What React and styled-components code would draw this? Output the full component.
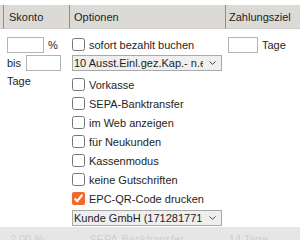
import React from "react";
import styled, { createGlobalStyle } from "styled-components";

const GlobalStyle = createGlobalStyle`
  body {
    margin: 0;
    background: #ffffff;
    font-family: "Liberation Sans", Arial, sans-serif;
    font-size: 11px;
    color: #1e1e1e;
  }
`;

const Page = styled.div`
  width: 300px;
  height: 240px;
  overflow: hidden;
  padding-top: 5px;
  box-sizing: border-box;
`;

const Grid = styled.div`
  display: grid;
  grid-template-columns: 3px 66px 156px 90px;
  width: 315px;
`;

const HeadCell = styled.div`
  height: 23px;
  display: flex;
  align-items: center;
  padding-left: ${(p) => p.$pad || 5}px;
  background: #dcdad6;
  border-left: ${(p) => (p.$first ? "none" : "1px solid #8e8e8e")};
  border-bottom: 1px solid #cfcdc9;
  white-space: nowrap;
`;

const BodyCell = styled.div`
  padding: 6px 0 0 ${(p) => p.$pad || 0}px;
  display: flex;
  flex-direction: column;
  border-left: 1px solid transparent;
`;

const Line = styled.div`
  display: flex;
  align-items: center;
  gap: ${(p) => p.$gap || 4}px;
  height: ${(p) => p.$h || 19}px;
  white-space: nowrap;
`;

const TextBox = styled.input`
  box-sizing: border-box;
  width: ${(p) => p.$w}px;
  height: 16px;
  margin: 0;
  padding: 0 2px;
  border: 1px solid #b4b4b4;
  background: #fff;
  font: inherit;
`;

const Check = styled.input.attrs({ type: "checkbox" })`
  width: 13px;
  height: 13px;
  margin: 0 0 0 2px;
  accent-color: #f0692f;
`;

const SelectWrap = styled.div`
  position: relative;
  width: 150px;
  height: 16px;
  margin: ${(p) => p.$m};
  margin-left: 2px;
`;

const Select = styled.select`
  appearance: none;
  box-sizing: border-box;
  width: 100%;
  height: 100%;
  margin: 0;
  padding: 0 18px 0 1px;
  border: 1px solid #a9a9a9;
  border-radius: 0;
  background: #efefef;
  color: #1e1e1e;
  font: inherit;
  font-size: 11px;
  line-height: 14px;
`;

const Chevron = styled.svg`
  position: absolute;
  right: 6px;
  top: 6px;
  pointer-events: none;
`;

const Band = styled.div`
  margin-top: 1px;
  height: 20px;
  background: #e6e6e6;
  display: flex;
  align-items: flex-start;
  box-sizing: border-box;
  padding: 6px 0 0 10px;
  color: #cfcfcf;
  gap: 45px;
  white-space: nowrap;
`;

const options = [
  "Vorkasse",
  "SEPA-Banktransfer",
  "im Web anzeigen",
  "für Neukunden",
  "Kassenmodus",
  "keine Gutschriften",
];

function Dropdown({ value, m }) {
  return (
    <SelectWrap $m={m}>
      <Select defaultValue={value}>
        <option>{value}</option>
      </Select>
      <Chevron width="7" height="4" viewBox="0 0 7 4">
        <path d="M0.5 0.5 L3.5 3.3 L6.5 0.5" fill="none" stroke="#444" strokeWidth="1" />
      </Chevron>
    </SelectWrap>
  );
}

export default function App() {
  return (
    <Page>
      <GlobalStyle />
      <Grid>
        <HeadCell $first />
        <HeadCell>Skonto</HeadCell>
        <HeadCell $pad={4}>Optionen</HeadCell>
        <HeadCell $pad={3}>Zahlungsziel</HeadCell>

        <BodyCell />
        <BodyCell $pad={3}>
          <Line $gap={4} $h={19}>
            <TextBox $w={37} />
            <span>%</span>
          </Line>
          <Line $gap={5} $h={17}>
            <span>bis</span>
            <TextBox $w={35} />
          </Line>
          <Line $h={20}>
            <span>Tage</span>
          </Line>
        </BodyCell>
        <BodyCell>
          <Line>
            <Check />
            <span>sofort bezahlt buchen</span>
          </Line>
          <Dropdown value="10 Ausst.Einl.gez.Kap.- n.einzeln" m="1px 0 4px" />
          {options.map((o) => (
            <Line key={o}>
              <Check />
              <span>{o}</span>
            </Line>
          ))}
          <Line>
            <Check defaultChecked />
            <span>EPC-QR-Code drucken</span>
          </Line>
          <Dropdown value="Kunde GmbH (1712817716)" m="2px 0 0" />
        </BodyCell>
        <BodyCell $pad={2}>
          <Line $gap={4}>
            <TextBox $w={30} />
            <span>Tage</span>
          </Line>
        </BodyCell>
      </Grid>
      <Band>
        <span>2,00 %</span>
        <span>SEPA-Banktransfer</span>
        <span>14 Tage</span>
      </Band>
    </Page>
  );
}
